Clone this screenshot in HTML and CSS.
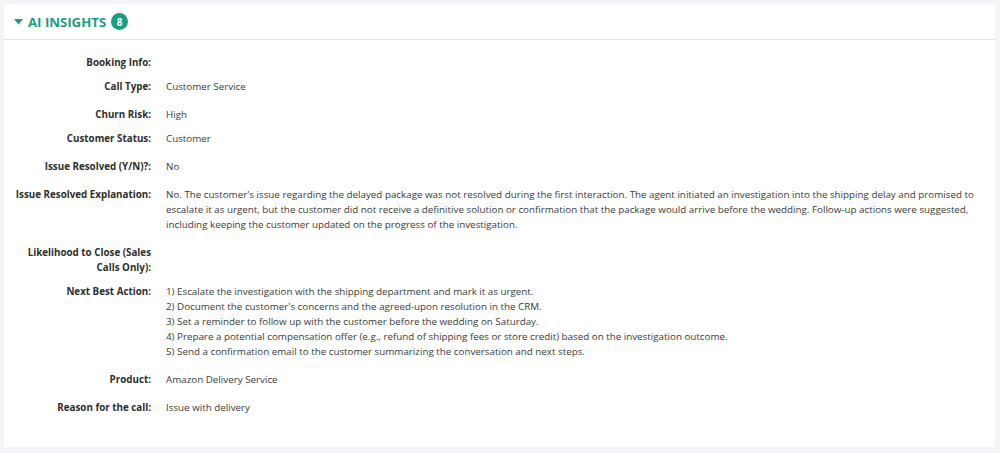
FILE: index.html
```html
<!DOCTYPE html>
<html>
<head>
<meta charset="utf-8">
<link rel="stylesheet" href="styles.css">
</head>
<body>
<section class="card">
  <header class="card-head">
    <svg class="caret" width="9" height="6" viewBox="0 0 9 6"><path d="M0 0 H9 L4.5 5.5 Z" fill="#1a9e84"/></svg>
    <h2 class="title">AI INSIGHTS</h2>
    <span class="badge">8</span>
  </header>
  <div class="fields">
    <div class="row tight"><div class="label">Booking Info:</div><div class="value"></div></div>
    <div class="row"><div class="label">Call Type:</div><div class="value">Customer Service</div></div>
    <div class="row tight"><div class="label">Churn Risk:</div><div class="value">High</div></div>
    <div class="row"><div class="label">Customer Status:</div><div class="value">Customer</div></div>
    <div class="row"><div class="label">Issue Resolved (Y/N)?:</div><div class="value">No</div></div>
    <div class="row"><div class="label">Issue Resolved Explanation:</div><div class="value">No. The customer's issue regarding the delayed package was not resolved during the first interaction. The agent initiated an investigation into the shipping delay and promised to escalate it as urgent, but the customer did not receive a definitive solution or confirmation that the package would arrive before the wedding. Follow-up actions were suggested, including keeping the customer updated on the progress of the investigation.</div></div>
    <div class="row tight"><div class="label">Likelihood to Close (Sales Calls Only):</div><div class="value"></div></div>
    <div class="row"><div class="label">Next Best Action:</div><div class="value">1) Escalate the investigation with the shipping department and mark it as urgent.<br>2) Document the customer's concerns and the agreed-upon resolution in the CRM.<br>3) Set a reminder to follow up with the customer before the wedding on Saturday.<br>4) Prepare a potential compensation offer (e.g., refund of shipping fees or store credit) based on the investigation outcome.<br>5) Send a confirmation email to the customer summarizing the conversation and next steps.</div></div>
    <div class="row"><div class="label">Product:</div><div class="value">Amazon Delivery Service</div></div>
    <div class="row"><div class="label">Reason for the call:</div><div class="value">Issue with delivery</div></div>
  </div>
</section>
</body>
</html>
```

FILE: styles.css
```css
html, body {
  margin: 0;
  padding: 0;
  background: #f4f5f8;
}
body {
  padding: 4px 5px 6px 4px;
  font-family: "Open Sans", "Liberation Sans", sans-serif;
}
.card {
  background: #ffffff;
  height: 443px;
  box-sizing: border-box;
}
.card-head {
  display: flex;
  align-items: center;
  height: 35px;
  padding-left: 10px;
  border-bottom: 1px solid #e3e3e6;
}
.caret {
  display: block;
  margin-top: 1px;
}
.title {
  margin: 0 0 0 5px;
  font-size: 13.2px;
  font-weight: 700;
  color: #1a9e84;
}
.badge {
  margin-left: 5px;
  width: 17px;
  height: 17px;
  border-radius: 50%;
  background: #1a9e84;
  color: #fff;
  font-size: 10px;
  font-weight: 700;
  display: flex;
  align-items: center;
  justify-content: center;
}
.fields {
  padding: 15px 0 0 0;
}
.row {
  display: flex;
  font-size: 9.8px;
  line-height: 15px;
  margin-bottom: 13px;
}
.row.tight {
  margin-bottom: 9px;
}
.label {
  flex: 0 0 147px;
  padding-left: 7px;
  box-sizing: border-box;
  text-align: right;
  font-weight: 700;
  color: #2e2e2e;
}
.value {
  flex: 1;
  padding-left: 15px;
  padding-right: 14px;
  color: #3a3a3a;
}
```
